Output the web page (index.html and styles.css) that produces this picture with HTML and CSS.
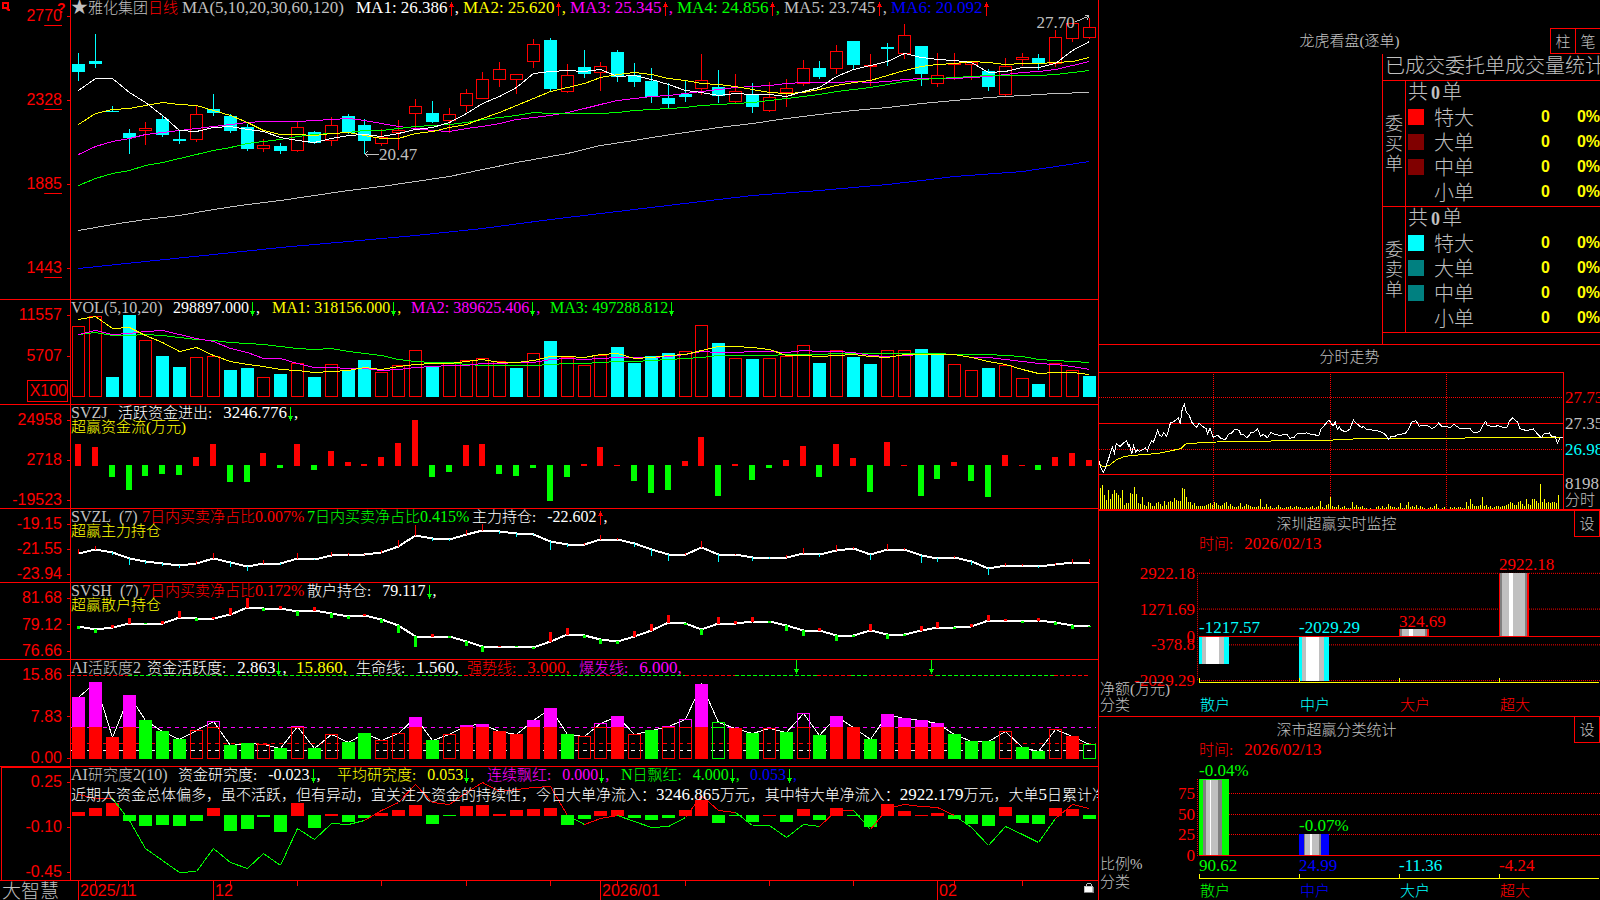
FILE: index.html
```html
<!DOCTYPE html>
<html lang="zh-CN">
<head>
<meta charset="utf-8">
<title>雅化集团 日线</title>
<link rel="stylesheet" href="styles.css">
</head>
<body>
<svg class="defs" aria-hidden="true">
  <symbol id="up" viewBox="0 0 5 14"><path d="M2 0h1v14H2zM1 2h3v2H1zM0 4h5v1H0z"/></symbol>
  <symbol id="down" viewBox="0 0 5 14"><path d="M2 0h1v14H2zM0 9h5v1H0zM1 10h3v2H1z"/></symbol>
</svg>
<div class="screen">
  <main class="charts">
    <section class="panel">
      <div class="axis axis-price">
        <svg class="pin" viewBox="0 0 8 9"><path d="M1 1h5v5H1z" fill="none" stroke="red" stroke-width="2"/><path d="M4 7h4v2H6z" fill="red"/></svg>
        <span class="help">?</span>
        <span>27<u>70</u></span><span>23<u>28</u></span><span>18<u>85</u></span><span>14<u>43</u></span>
      </div>
      <div class="plot">
        <svg id="price" class="canvas" viewBox="71 0 1027 299" preserveAspectRatio="none"></svg>
        <div class="readout cols-ma">
          <span class="gray">★<span class="zh">雅化集团</span><span class="zh red">日线</span></span>
          <span class="gray">MA(5,10,20,30,60,120)</span>
          <span class="white">MA1: 26.386<svg class="arrow red"><use href="#up"/></svg>,</span>
          <span class="yellow">MA2: 25.620<svg class="arrow red"><use href="#up"/></svg>,</span>
          <span class="magenta">MA3: 25.345<svg class="arrow red"><use href="#up"/></svg>,</span>
          <span class="green">MA4: 24.856<svg class="arrow red"><use href="#up"/></svg>,</span>
          <span class="gray">MA5: 23.745<svg class="arrow red"><use href="#up"/></svg>,</span>
          <span class="blue">MA6: 20.092<svg class="arrow red"><use href="#up"/></svg></span>
        </div>
        <span class="mark mark-low">20.47</span>
        <span class="mark mark-high">27.70</span>
      </div>
    </section>

    <section class="panel">
      <div class="axis axis-vol"><span>11557</span><span>5707</span><span class="unit">X100</span></div>
      <div class="plot">
        <svg id="volume" class="canvas" viewBox="71 300 1027 104" preserveAspectRatio="none"></svg>
        <div class="readout small cols-vol">
          <span class="gray">VOL(5,10,20)</span>
          <span class="white">298897.000<svg class="arrow green"><use href="#down"/></svg>,</span>
          <span class="yellow">MA1: 318156.000<svg class="arrow green"><use href="#down"/></svg>,</span>
          <span class="magenta">MA2: 389625.406<svg class="arrow green"><use href="#down"/></svg>,</span>
          <span class="green">MA3: 497288.812<svg class="arrow green"><use href="#down"/></svg></span>
        </div>
      </div>
    </section>

    <section class="panel">
      <div class="axis"><span>24958</span><span>2718</span><span>-19523</span></div>
      <div class="plot">
        <svg id="flow" class="canvas" viewBox="71 405 1027 103" preserveAspectRatio="none"></svg>
        <div class="readout cols-flow">
          <span class="gray small">SVZJ</span>
          <span class="white"><span class="zh key">活跃资金进出:</span>3246.776<svg class="arrow green"><use href="#down"/></svg>,</span>
        </div>
        <div class="sub zh">超赢资金流(万元)</div>
      </div>
    </section>

    <section class="panel">
      <div class="axis"><span>-19.15</span><span>-21.55</span><span>-23.94</span></div>
      <div class="plot">
        <svg id="mainhold" class="canvas" viewBox="71 509 1027 73" preserveAspectRatio="none"></svg>
        <div class="readout small cols-hold">
          <span class="gray">SVZL&nbsp; (7)</span>
          <span class="red">7<span class="zh">日内买卖净占比</span>0.007%</span>
          <span class="green">7<span class="zh">日内买卖净占比</span>0.415%</span>
          <span class="white"><span class="zh key">主力持仓:</span>-22.602<svg class="arrow red"><use href="#up"/></svg>,</span>
        </div>
        <div class="sub zh">超赢主力持仓</div>
      </div>
    </section>

    <section class="panel">
      <div class="axis"><span>81.68</span><span>79.12</span><span>76.66</span></div>
      <div class="plot">
        <svg id="retail" class="canvas" viewBox="71 583 1027 76" preserveAspectRatio="none"></svg>
        <div class="readout small cols-hold">
          <span class="gray">SVSH&nbsp; (7)</span>
          <span class="red">7<span class="zh">日内买卖净占比</span>0.172%</span>
          <span class="white"><span class="zh key">散户持仓:</span>79.117<svg class="arrow green"><use href="#down"/></svg>,</span>
        </div>
        <div class="sub zh">超赢散户持仓</div>
      </div>
    </section>

    <section class="panel">
      <div class="axis"><span>15.86</span><span>7.83</span><span>0.00</span></div>
      <div class="plot">
        <svg id="active" class="canvas" viewBox="71 660 1027 106" preserveAspectRatio="none"></svg>
        <div class="readout cols-active">
          <span class="gray small">AI<span class="zh">活跃度</span>2</span>
          <span class="white"><span class="zh key">资金活跃度:</span>2.863<svg class="arrow green"><use href="#down"/></svg>,</span>
          <span class="yellow">15.860,</span>
          <span class="white"><span class="zh key">生命线:</span>1.560,</span>
          <span class="red"><span class="zh key">强势线:</span>3.000,</span>
          <span class="magenta"><span class="zh key">爆发线:</span>6.000,</span>
        </div>
      </div>
    </section>

    <section class="panel">
      <div class="axis axis-boxed"><span>0.25</span><span>-0.10</span><span>-0.45</span></div>
      <div class="plot">
        <svg id="study" class="canvas" viewBox="71 767 1027 113" preserveAspectRatio="none"></svg>
        <div class="readout small cols-study">
          <span class="gray">AI<span class="zh">研究度</span>2(10)</span>
          <span class="white"><span class="zh key">资金研究度:</span>-0.023<svg class="arrow green"><use href="#down"/></svg>,</span>
          <span class="yellow"><span class="zh key">平均研究度:</span>0.053<svg class="arrow green"><use href="#down"/></svg>,</span>
          <span class="magenta"><span class="zh key">连续飘红:</span>0.000<svg class="arrow green"><use href="#down"/></svg>,</span>
          <span class="green">N<span class="zh key">日飘红:</span>4.000<svg class="arrow green"><use href="#down"/></svg>,</span>
          <span class="blue">0.053<svg class="arrow green"><use href="#down"/></svg>,</span>
        </div>
        <p class="comment"><span class="zh">近期大资金总体偏多，虽不活跃，但有异动，宜关注大资金的持续性，今日大单净流入：</span>3246.865<span class="zh">万元，其中特大单净流入：</span>2922.179<span class="zh">万元，大单</span>5<span class="zh">日累计净流入</span></p>
      </div>
    </section>

    <footer class="timeline">
      <div class="brand">大智慧</div>
      <div class="plot" id="dates">
        <svg id="ticks" class="canvas" viewBox="71 881 1027 19" preserveAspectRatio="none"></svg>
        <svg class="lock" viewBox="0 0 11 12"><path d="M2 4V2h1V1h4v1h1v2H7V2H3v2zM0 4h9v6H0z" fill="#c0c0c0"/><path d="M1 5h7v5H1z" fill="#fff"/><path d="M9 5h1v6H0v-1h9z" fill="#808080"/></svg>
      </div>
    </footer>
  </main>

  <aside class="side">
    <section class="orders">
      <header class="orders-head">
        <h2 class="zh">龙虎看盘(逐单)</h2>
        <div class="tabs"><button type="button">柱</button><button type="button">笔</button></div>
      </header>
      <div class="orders-body">
        <h3>已成交委托单成交量统计</h3>
        <table>
          <colgroup><col class="c-side"><col class="c-swatch"><col class="c-name"><col><col class="c-pct"></colgroup>
          <tbody>
            <tr><th rowspan="5" class="side-label">委<br>买<br>单</th><td colspan="4" class="total">共<b>0</b>单</td></tr>
            <tr><td><i class="swatch s-red"></i></td><th>特大</th><td class="num">0</td><td class="num">0%</td></tr>
            <tr><td><i class="swatch s-maroon"></i></td><th>大单</th><td class="num">0</td><td class="num">0%</td></tr>
            <tr><td><i class="swatch s-maroon"></i></td><th>中单</th><td class="num">0</td><td class="num">0%</td></tr>
            <tr><td></td><th>小单</th><td class="num">0</td><td class="num">0%</td></tr>
          </tbody>
          <tbody>
            <tr><th rowspan="5" class="side-label">委<br>卖<br>单</th><td colspan="4" class="total">共<b>0</b>单</td></tr>
            <tr><td><i class="swatch s-cyan"></i></td><th>特大</th><td class="num">0</td><td class="num">0%</td></tr>
            <tr><td><i class="swatch s-teal"></i></td><th>大单</th><td class="num">0</td><td class="num">0%</td></tr>
            <tr><td><i class="swatch s-teal"></i></td><th>中单</th><td class="num">0</td><td class="num">0%</td></tr>
            <tr><td></td><th>小单</th><td class="num">0</td><td class="num">0%</td></tr>
          </tbody>
        </table>
      </div>
    </section>

    <section class="intraday">
      <h2 class="zh">分时走势</h2>
      <div class="intraday-body">
        <div class="plot"><svg id="minute" class="canvas" viewBox="27 97 1395 411" preserveAspectRatio="none"></svg></div>
        <div class="scale"><span class="red">27.73</span><span class="gray">27.35</span><span class="cyan">26.98</span><span class="gray">8198</span><span class="gray zh">分时</span></div>
      </div>
    </section>

    <section class="stats stats-live">
      <header class="stats-head"><h2 class="zh">深圳超赢实时监控</h2><button type="button">设</button></header>
      <p class="stats-time red"><span class="zh key">时间:</span>2026/02/13</p>
      <div class="plot" id="live-plot"><svg id="live" class="canvas" viewBox="1099 551 501 145" preserveAspectRatio="none"></svg></div>
      <div class="cats zh"><span class="gray">分类</span><span class="cyan">散户</span><span class="cyan">中户</span><span class="red">大户</span><span class="red">超大</span></div>
    </section>

    <section class="stats">
      <header class="stats-head"><h2 class="zh">深市超赢分类统计</h2><button type="button">设</button></header>
      <p class="stats-time red"><span class="zh key">时间:</span>2026/02/13</p>
      <div class="plot" id="class-plot"><svg id="class" class="canvas" viewBox="1099 757 501 125" preserveAspectRatio="none"></svg></div>
      <div class="cats zh"><span></span><span class="green">散户</span><span class="blue">中户</span><span class="cyan">大户</span><span class="red">超大</span></div>
    </section>
  </aside>
</div>
<script src="charts.js"></script>
</body>
</html>
```

FILE: styles.css
```css
* { box-sizing: border-box; }

html, body { margin: 0; background: #000; }

body {
  color: #c0c0c0;
  font: 17px/15px "Liberation Serif", "Noto Sans CJK SC", serif;
  overflow: hidden;
}

h2, h3, p { margin: 0; font-weight: 400; }

.defs { position: absolute; width: 0; height: 0; }

.zh { font-family: "Liberation Serif", "Noto Sans CJK SC", sans-serif; font-size: 15px; font-weight: 300; }
.small { font-size: 16px; }
.key { margin-right: 11px; }

.red { color: #f00; }
.green { color: #0f0; }
.blue { color: #00f; }
.cyan { color: #0ff; }
.yellow { color: #ff0; }
.magenta { color: #f0f; }
.white { color: #fff; }
.gray { color: #c0c0c0; }

.screen {
  display: grid;
  grid-template-columns: minmax(0, 1fr) 501px;
  min-height: 100vh;
}

/* left column: stacked indicator panels */
.charts {
  display: grid;
  grid-template-rows: 300fr 105fr 104fr 74fr 77fr 107fr 114fr 19fr;
  border-right: 1px solid #f00;
}

.panel {
  display: grid;
  grid-template-columns: 71px minmax(0, 1fr);
  border-bottom: 1px solid #f00;
}

.axis {
  position: relative;
  display: flex;
  flex-direction: column;
  justify-content: space-between;
  padding-top: 7px;
  border-right: 1px solid #f00;
  color: #f00;
  font: 16px/16px "Liberation Sans", sans-serif;
}
.axis > span { display: flex; justify-content: flex-end; align-items: center; }
.axis > span::after { content: ""; width: 3px; height: 1px; margin-left: 5px; background: #f00; }
.axis u { text-underline-offset: 4px; text-decoration-thickness: 1px; }

.axis-price { padding: 8px 0 23px; }
.axis .help { position: absolute; left: 57px; top: 0; font-weight: 700; font-size: 14px; }
.axis .help::after { display: none; }
.pin { position: absolute; left: 2px; top: 2px; width: 8px; height: 9px; }

.axis-vol { display: grid; grid-template-columns: 100%; grid-template-rows: 41fr 32fr 22px; align-items: start; padding-bottom: 2px; }
.axis > .unit { justify-self: end; margin-right: 2px; height: 22px; padding: 0 0 0 2px; border: 1px solid #f00; }
.axis > .unit::after { display: none; }

.axis-boxed { margin-left: 1px; border-left: 1px solid #f00; border-top: 1px solid #f00; padding-top: 6px; }

.plot { position: relative; min-width: 0; }
.canvas { position: absolute; inset: 0; width: 100%; height: 100%; shape-rendering: crispEdges; }
.canvas * { vector-effect: non-scaling-stroke; }

.readout { position: relative; display: grid; height: 15px; white-space: nowrap; }
.cols-ma { grid-template-columns: 111px 174px repeat(5, 107px) auto; }
.cols-vol { grid-template-columns: 102px 99px 139px 139px auto; }
.cols-flow { grid-template-columns: 47px auto; }
.cols-hold { grid-template-columns: 71px 165px 165px auto; }
.cols-active { grid-template-columns: 76px 149px 60px 111px 112px auto; }
.cols-study { grid-template-columns: 107px 159px 150px 134px 129px auto; }

.arrow { width: 5px; height: 14px; margin: 0 1px; fill: currentColor; vertical-align: -3px; shape-rendering: crispEdges; }

.sub { position: relative; color: #ff0; }
.comment { position: relative; margin-top: 2px; padding: 3px 0; overflow: hidden; color: #fff; white-space: nowrap; }
.mark { position: absolute; font-size: 17px; }
.mark-low { left: 30%; top: 49%; }
.mark-high { left: 94%; top: 5%; }

.timeline { display: grid; grid-template-columns: 71px minmax(0, 1fr); }
.brand { padding-left: 2px; font: 300 19px/18px "Noto Sans CJK SC", sans-serif; white-space: nowrap; }
.date {
  position: absolute;
  top: 0;
  height: 100%;
  padding-left: 1px;
  border-left: 1px solid #f00;
  color: #f00;
  font: 16px/19px "Liberation Sans", sans-serif;
}
.lock { position: absolute; right: 3px; top: 1px; width: 11px; height: 12px; shape-rendering: crispEdges; }

/* right column */
.side { display: grid; grid-template-rows: 345fr 166fr 206fr 183fr; min-width: 0; }
.side > section { min-width: 0; overflow: hidden; }

button {
  width: 25px;
  height: 25px;
  padding: 0 0 2px;
  border: 1px solid #f00;
  background: #000;
  color: #c0c0c0;
  font: 300 15px/15px "Noto Sans CJK SC", sans-serif;
}

.orders { display: flex; flex-direction: column; border-bottom: 1px solid #f00; }
.orders-head { display: grid; grid-template-columns: 1fr auto 1fr; align-items: center; padding-top: 28px; height: 54px; }
.orders-head h2 { grid-column: 2; }
.tabs { justify-self: end; display: flex; }
.tabs button { border-right: 0; height: 26px; }

.orders-body {
  flex: 1;
  align-self: flex-end;
  width: 218px;
  overflow: hidden;
  border-left: 1px solid #f00;
  font: 300 20px/20px "Noto Sans CJK SC", sans-serif;
}
.orders-body h3 { height: 26px; padding-left: 2px; font-size: 20px; font-weight: 300; line-height: 22px; white-space: nowrap; }
table { width: 100%; table-layout: fixed; border-spacing: 0; border-bottom: 1px solid #f00; }
tr { height: 25px; }
td, th { padding: 0 0 3px; font-weight: 300; text-align: left; white-space: nowrap; }
tbody tr:first-child > * { border-top: 1px solid #f00; }
.c-side { width: 23px; }
.c-swatch { width: 28px; }
.c-name { width: 50px; }
.c-pct { width: 50px; }
.side-label { border-right: 1px solid #f00; text-align: center; font-size: 18px; }
.total { padding-left: 2px; }
.total b { margin: 0 2px 0 3px; font: 700 18px/20px "Liberation Serif", serif; }
.swatch { display: block; width: 16px; height: 16px; margin-left: 2px; }
.s-red { background: #f00; }
.s-maroon { background: #800000; }
.s-cyan { background: #0ff; }
.s-teal { background: #008080; }
.num { color: #ff0; text-align: right; font: 700 16px/20px "Liberation Sans", sans-serif; }

.intraday { display: flex; flex-direction: column; border-bottom: 2px solid #f00; }
.intraday h2 { height: 27px; line-height: 24px; text-align: center; }
.intraday-body { flex: 1; display: grid; grid-template-columns: minmax(0, 1fr) 36px; overflow: hidden; }
.scale { display: grid; grid-template-rows: 26fr 26fr 34fr 17fr 16fr; padding-top: 18px; padding-left: 1px; overflow: hidden; white-space: nowrap; }

.stats { display: flex; flex-direction: column; }
.stats-live { border-bottom: 1px solid #f00; }
.stats-head { display: grid; grid-template-columns: 1fr 26px; height: 25px; align-items: center; text-align: center; }
.stats-head button { border-top: 0; width: 26px; height: 26px; }
.stats-time { padding-left: 100px; }
.stats .plot { flex: 1; }
.cats { display: grid; grid-template-columns: 100px repeat(4, 1fr); height: 18px; line-height: 18px; padding-left: 1px; }
.stats-live .cats { height: 20px; line-height: 19px; }
.tag { position: absolute; transform: translateY(-50%); white-space: nowrap; }
.tag-end { text-align: right; }
```

FILE: charts.js
```js
const RED = '#f00', GREEN = '#0f0', CYAN = '#0ff', YELLOW = '#ff0', MAGENTA = '#f0f', WHITE = '#fff', GRAY = '#c0c0c0', BLUE = '#00f';
const cx = i => Math.round(78 + 16.85 * i);
const put = (id, parts) => { document.getElementById(id).innerHTML = parts.join(''); };
const rect = (x, y, w, h, fill) => `<rect x="${x}" y="${y}" width="${w}" height="${h}" fill="${fill}"/>`;
const box = (x, y, w, h, stroke) => `<rect x="${x + 0.5}" y="${y + 0.5}" width="${w - 1}" height="${h - 1}" fill="none" stroke="${stroke}"/>`;
const seg = (x1, y1, x2, y2, stroke, extra = '') => `<line x1="${x1}" y1="${y1}" x2="${x2}" y2="${y2}" stroke="${stroke}" ${extra}/>`;
const path = (pts, stroke, width = 1) => `<polyline points="${pts.join(' ')}" fill="none" stroke="${stroke}" stroke-width="${width}"/>`;
const series = (ys, stroke, width) => path(ys.map((y, i) => `${cx(i) + 0.5},${y + 0.5}`), stroke, width);
const sparse = (pairs, stroke) => path(pairs.map(([i, y]) => `${cx(i) + 0.5},${y + 0.5}`), stroke);

// daily candles: colour, high, body top, body bottom, low
const candles = `c 53 64 72 81|c 34 61 64 68|c 106 111 112 112|c 129 133 138 154|r 122 128 131 145|c 115 119 135 137|c 130 139 141 144|r 106 114 140 142|c 94 109 113 116|c 114 116 131 133|c 124 127 149 151|r 139 145 149 152|c 143 146 151 154|r 122 127 151 152|c 131 132 143 144|r 117 125 141 146|c 114 116 133 134|c 119 125 141 154|r 129 137 144 146|r 120 130 133 150|r 99 106 114 128|c 101 113 122 123|r 108 114 121 133|r 89 93 106 112|r 72 79 99 99|r 62 69 80 87|r 74 74 80 94|r 39 44 62 68|c 38 40 89 92|r 64 75 92 93|c 50 67 74 78|r 62 66 73 91|c 50 52 77 82|c 63 75 82 87|c 68 81 97 103|c 83 98 104 108|c 81 94 97 102|r 54 80 89 95|c 70 87 96 103|r 74 91 102 103|c 83 95 107 113|r 82 97 111 112|r 79 88 93 107|r 60 68 84 86|c 61 68 77 79|r 45 51 69 74|c 41 41 65 69|r 54 65 67 86|c 43 47 49 66|r 24 35 54 59|c 46 46 74 86|r 53 75 84 87|r 53 63 65 80|r 61 62 65 80|c 69 71 87 91|r 58 66 95 96|r 53 57 60 66|c 54 58 63 70|r 30 37 64 67|r 23 23 39 42|r 18 27 38 39`
  .split('|').map(s => s.split(' ')).map(([k, ...v]) => [k, ...v.map(Number)]);

put('price', [
  ...candles.map(([k, hi, top, bot, lo], i) => {
    const x = cx(i), c = k === 'c' ? CYAN : RED;
    return rect(x, hi, 1, top - hi, c) + rect(x, bot, 1, lo - bot, c) +
      (k === 'c' ? rect(x - 6, top, 13, bot - top, c) : box(x - 6, top, 13, bot - top, c));
  }),
  sparse([[0,268],[4,261],[8,254],[12,247],[16,241],[20,235],[24,228],[28,219],[32,211],[37,201],[40,195],[44,190],[48,184],[50,180],[52,176],[56,171],[60,161]], BLUE),
  sparse([[0,230],[2,224],[4,219],[6,215],[8,209],[10,204],[12,200],[14,195],[16,190],[18,186],[20,181],[22,176],[24,169],[26,162],[28,156],[29,153],[31,145],[33,140],[34,137],[36,132],[38,127],[40,123],[42,118],[44,114],[46,110],[48,107],[50,103],[52,100],[54,97],[56,95],[58,93],[60,92]], GRAY),
  series([154,146,141,138,134,132,130,128,126,124,122,121,121,121,120,119,118,120,123,126,128,130,131,128,126,123,119,117,115,112,108,104,100,98,96,95,93,91,89,87,86,85,83,82,82,82,81,82,81,79,78,78,78,77,76,74,72,71,69,65,61], MAGENTA),
  series([185,178,173,170,165,162,158,154,150,147,143,141,139,136,134,133,132,130,130,128,126,125,124,122,119,117,115,112,113,113,113,113,112,110,109,108,107,105,104,103,102,100,98,96,94,91,89,87,84,81,79,78,77,76,75,75,75,75,74,72,70], GREEN),
  series([124,113,109,108,105,102,104,105,110,115,122,130,134,134,135,133,132,135,138,138,133,131,127,124,118,112,105,98,91,87,83,77,74,72,74,78,80,83,84,86,89,92,93,92,89,85,82,80,75,70,66,64,63,61,62,64,63,63,62,61,57], YELLOW),
  series([90,78,78,92,102,115,130,131,127,126,129,131,137,140,142,138,135,134,136,133,129,127,122,113,103,96,87,73,71,70,71,69,76,75,79,84,90,92,95,93,94,94,96,91,87,76,69,65,61,53,57,59,60,62,72,71,67,67,63,50,41], WHITE),
  path(['368,151', '365,154', '368,157'], GRAY), seg(365, 154.5, 379, 154.5, GRAY),
  path(['1075,22', '1089,16'], GRAY), path(['1085,15', '1089,16', '1087,20'], GRAY)
]);

// volume: r = hollow red, c = solid cyan
const volKind = 'rrccrccrrccrcrcrccrrrcrrrrcrcrrrccccrrcrcrrrcrccrrccrrcrrcrrc';
const volTop = [326,316,377,315,340,356,367,357,356,370,368,377,374,363,377,364,370,360,372,365,350,367,363,360,358,361,368,353,341,357,365,355,347,363,356,353,351,325,343,358,359,358,356,345,363,350,357,364,350,350,349,354,364,370,368,365,378,384,363,370,376];
put('volume', [
  ...volTop.map((t, i) => volKind[i] === 'c' ? rect(cx(i) - 6, t, 13, 397 - t, CYAN) : box(cx(i) - 6, t, 13, 397 - t, RED)),
  series([334,332,335,335,334,335,337,339,340,342,343,344,346,348,349,348,351,353,355,359,361,362,362,364,365,365,365,365,364,363,363,362,361,361,360,359,358,357,355,355,355,355,354,354,354,353,353,353,353,353,353,353,354,354,354,355,356,359,360,361,362], GREEN),
  series([334,330,334,333,331,330,334,338,341,348,352,358,358,363,367,367,368,368,370,369,367,366,365,365,363,363,362,362,359,358,359,358,357,357,357,356,354,351,352,352,351,351,352,350,351,351,352,355,356,355,354,354,354,357,357,359,361,363,364,366,369], MAGENTA),
  series([319,316,328,327,335,342,351,347,355,361,364,366,369,370,372,371,370,367,369,366,364,363,363,361,359,362,362,360,356,356,357,354,353,358,357,355,354,350,346,346,347,349,355,355,356,355,354,356,357,354,354,354,354,357,361,364,369,373,372,372,374], YELLOW)
]);

// bars that grow up (red) or down from a zero line
const bars = (ends, zero, w, down) => ends.map((e, i) => {
  const x = cx(i) - (w >> 1);
  return e <= zero ? rect(x, e, w, zero + 1 - e, RED) : rect(x, zero, w, e - zero, down);
});

put('flow', bars([444,447,477,490,476,474,475,457,444,482,482,453,468,444,470,451,462,464,457,443,420,477,472,445,444,474,476,468,501,477,464,447,465,481,493,490,461,437,496,464,480,468,460,446,477,444,458,492,442,465,496,479,462,481,497,455,465,470,457,453,460], 465, 6, GREEN));

const spikes = (line, ends, w, down) => line.map((y, i) => {
  const e = ends[i], x = cx(i) - (w >> 1);
  return e <= y ? rect(x, e, w, y - e + 1, RED) : rect(x, y, w, e - y, down);
});

const main = [553,549,552,558,561,563,565,563,558,562,566,563,563,558,559,555,554,554,552,546,535,538,539,534,530,531,533,534,541,544,544,539,539,543,549,554,554,547,554,554,557,557,557,553,554,550,548,554,549,549,555,558,557,561,568,565,565,566,564,562,562];
put('mainhold', [series(main, WHITE, 2), ...spikes(main, [549,546,555,565,564,566,568,561,553,567,571,560,565,553,560,552,553,554,550,540,525,541,541,530,524,534,537,535,550,547,543,535,538,547,556,561,553,541,562,554,561,559,555,548,557,545,547,560,544,548,563,562,556,565,575,563,564,568,563,559,559], 1, CYAN)]);

const retail = [626,629,627,623,623,623,617,618,618,614,607,608,608,611,610,613,616,615,619,625,636,636,636,641,646,646,646,647,641,634,635,639,641,636,630,622,623,629,623,623,621,621,625,630,630,635,635,630,634,634,630,627,627,626,620,620,621,620,622,625,626];
put('retail', [series(retail, WHITE, 2), ...spikes(retail, [629,633,625,618,624,621,611,621,617,608,598,611,606,616,607,618,619,614,623,633,647,634,638,646,652,646,647,649,632,628,638,644,644,631,624,615,625,635,617,621,617,623,631,636,628,641,637,624,639,636,626,622,629,624,615,619,623,618,625,629,627], 3, GREEN)]);

// activity bars: F solid red, G solid green, O hollow red, H hollow green; magenta above the 6.0 level
const actKind = 'FFFFGGGOOGGOGOGOGGOOFGOFFFFFFGOOFOGOOFHFGOGOGFFGFFFFGGGOGGOFH';
const actTop = [697,682,737,695,720,731,739,730,721,745,743,744,748,726,748,734,742,733,740,733,717,740,734,725,724,731,734,720,708,734,736,723,716,734,730,726,719,684,722,728,733,728,732,713,735,716,727,739,714,718,720,723,734,741,741,731,747,751,729,736,744];
const edges = [71,128,464,549,600,617,685,735,817,851,869,936,1054,1088];
put('active', [
  ...edges.slice(1).map((x, i) => seg(edges[i], 675.5, x, 675.5, i % 2 ? GREEN : RED, 'stroke-dasharray="4 2"')),
  seg(71, 727.5, 1096, 727.5, MAGENTA, 'stroke-dasharray="4 4"'),
  seg(71, 743.5, 1096, 743.5, RED, 'stroke-dasharray="4 4"'),
  seg(71, 750.5, 1096, 750.5, WHITE, 'stroke-dasharray="4 4"'),
  series(actTop, WHITE),
  ...actTop.map((t, i) => {
    const x = cx(i) - 6, k = actKind[i];
    if (k === 'G') return rect(x, t, 13, 759 - t, GREEN);
    if (k === 'F') return t < 727 ? rect(x, t, 13, 727 - t, MAGENTA) + rect(x, 727, 13, 32, RED) : rect(x, t, 13, 759 - t, RED);
    if (k === 'H') return box(x, t, 13, 759 - t, GREEN) + (t < 727 ? rect(x, 727, 13, 1, GREEN) : '');
    return t < 727 ? box(x, t, 13, 728 - t, MAGENTA) + box(x, 727, 13, 32, RED) : box(x, t, 13, 759 - t, RED);
  }),
  ...[796, 931].map(x => rect(x, 660, 1, 14, GREEN) + rect(x - 2, 669, 5, 1, GREEN) + rect(x - 1, 670, 3, 2, GREEN))
]);

const study = [794,798,798,820,848,860,872,871,848,862,868,853,865,828,839,823,824,820,810,802,784,802,804,792,782,791,789,787,786,815,824,818,815,821,827,826,817,795,810,812,825,825,837,824,826,810,810,829,808,804,806,807,815,827,845,826,834,842,818,804,808];
const studyTone = 'rrgggggggggggggggrrrrrrrrrrrrgrrggggrrrgggggrrgrrrrrggggggrr';
put('study', [
  ...bars([812,808,803,821,826,825,826,821,808,831,829,817,832,803,828,814,822,818,813,810,805,824,816,806,805,814,810,809,808,825,819,811,810,818,820,818,810,800,823,816,822,815,822,809,820,808,816,827,804,811,815,813,819,824,826,807,823,824,808,809,819], 815, 13, GREEN),
  ...[...studyTone].map((t, i) => seg(cx(i) + 0.5, study[i] + 0.5, cx(i + 1) + 0.5, study[i + 1] + 0.5, t === 'r' ? RED : GREEN))
]);

put('ticks', [95,128,230,297,381,466,550,617,685,769,853,954,1022].map(x => rect(x, 881, 1, 5, RED)));
[['2025/11', 78], ['12', 213], ['2026/01', 600], ['02', 937]].forEach(([t, x]) => {
  const el = document.createElement('span');
  el.className = 'date';
  el.textContent = t;
  el.style.left = (x - 71) / 10.27 + '%';
  document.getElementById('dates').append(el);
});

// intraday price, average and per-minute volume
const dots = 'stroke-dasharray="1 1"';
const mins = [21,24,14,9,19,10,15,19,16,14,11,19,4,6,6,16,15,22,15,6,5,12,4,3,7,6,3,3,6,7,5,3,8,4,7,8,7,11,9,8,8,21,20,12,7,7,4,6,3,3,3,3,3,4,5,6,4,7,6,4,3,4,6,7,3,5,3,2,2,3,6,2,3,5,4,3,2,2,2,3,10,2,2,5,2,3,1,1,2,4,2,1,1,2,2,3,1,2,3,2,2,1,1,2,1,2,3,1,2,3,8,2,1,4,5,12,3,2,2,4,1,2,3,1,1,1,7,2,4,2,2,3,1,1,0,1,0,0,2,3,1,3,1,2,5,3,2,2,1,2,6,1,1,4,7,2,3,2,4,1,3,2,1,0,1,2,1,3,5,1,0,1,2,0,0,2,1,2,1,2,2,1,1,7,3,10,5,3,3,3,4,12,3,4,2,3,1,2,3,3,2,3,3,4,5,7,6,4,4,7,8,5,3,10,5,4,10,10,8,6,25,7,10,6,7,6,7,7,6,14,0,0,19];
put('minute', [
  ...[172, 328].map(y => seg(27, y, 1420, y, RED, dots)),
  ...[370, 721, 1069].map(x => seg(x, 97, x, 507, RED, dots)),
  ...[98.5, 250, 403].map(y => seg(27, y, 1420, y, RED)),
  seg(1420.5, 97, 1420.5, 508, RED),
  ...mins.map((h, i) => rect(30 + 6 * i, 507 - 3 * h, 3, 3 * h + 1, YELLOW)),
  path(['27,373 40,382 58,377 80,360 100,352 125,347 165,345 210,340 240,334 272,327 287,313 320,310 380,307 490,305 600,303 710,302 790,298 1040,297 1210,293 1420,292'], YELLOW),
  path(['27,365 33,385 40,397 46,385 55,360 67,322 73,340 79,312 90,320 100,310 110,303 116,320 119,316 125,343 131,318 137,337 143,330 149,335 158,330 166,325 172,333 179,315 185,303 190,308 203,272 209,287 215,290 221,278 230,290 236,270 242,247 250,247 265,235 271,252 277,205 283,194 290,220 297,225 305,247 319,264 327,250 340,262 348,266 353,283 360,265 370,293 383,287 394,297 406,300 415,284 425,280 435,268 447,272 452,283 460,283 470,294 478,287 483,277 492,277 503,268 512,290 520,284 532,294 543,278 555,284 570,287 590,283 600,297 608,292 612,294 620,283 635,281 650,280 660,283 672,283 680,288 687,287 692,270 703,257 717,241 724,252 730,258 736,247 742,270 748,262 755,272 768,277 780,268 790,241 800,252 815,264 820,260 830,270 860,272 880,280 890,290 896,300 903,290 912,292 925,284 945,282 955,270 965,247 978,243 988,260 1000,256 1018,260 1025,267 1035,263 1046,250 1055,260 1070,260 1080,264 1092,254 1110,267 1140,267 1150,278 1157,280 1170,275 1180,255 1187,245 1192,258 1205,260 1215,262 1222,257 1235,262 1250,265 1258,245 1267,235 1283,247 1290,267 1310,273 1330,268 1340,280 1354,294 1362,283 1378,280 1385,290 1395,290 1402,310 1410,295 1420,292'], WHITE)
]);

// cylinder-shaded bar: stripes are [offset, width, colour]
const tube = (x, y, h, base, stripes) => rect(x, y, 30, h, base) + stripes.map(([dx, w, c]) => rect(x + dx, y, w, h, c)).join('');
const cold = [[3,4,GRAY],[7,13,WHITE],[20,5,GRAY]];
const warm = [[1,2,'#808080'],[3,7,GRAY],[10,4,WHITE],[14,12,GRAY],[26,2,'#808080']];
const scaleLine = y => [1199, 1299, 1399, 1499].map(x => rect(x, y - 4, 1, 4, YELLOW)).join('') + rect(1199, y, 400, 1, YELLOW);

put('live', [
  ...[572.5, 608.5, 644.5, 680.5].map(y => seg(1199, y, 1600, y, RED, dots)),
  seg(1197.5, 572, 1197.5, 681, RED, dots),
  tube(1199, 637, 27, CYAN, cold), tube(1299, 637, 44, CYAN, cold),
  tube(1399, 629, 7, RED, warm), tube(1499, 572, 64, RED, warm),
  rect(1199, 636, 401, 1, RED), scaleLine(682)
]);
put('class', [
  ...[792.5, 813.5, 834.5].map(y => seg(1199, y, 1600, y, RED, dots)),
  seg(1197.5, 778, 1197.5, 856, RED, dots),
  tube(1199, 778, 77, GREEN, [[4,3,'#808080'],[7,4,GRAY],[11,1,WHITE],[12,7,GRAY],[19,4,'#808080']]),
  rect(1199, 778, 30, 1, GREEN),
  tube(1299, 834, 21, BLUE, [[5,1,'#808080'],[6,5,GRAY],[11,2,WHITE],[13,7,GRAY],[20,2,'#808080']]),
  rect(1199, 855, 401, 1, RED), scaleLine(878)
]);

// chart labels: text, x (right edge when end-aligned), y, colour class
const tags = (host, top, height, list) => list.forEach(([text, x, y, cls, end]) => {
  const el = document.createElement('span');
  el.className = 'tag ' + cls + (end ? ' tag-end' : '');
  el.textContent = text;
  if (end) el.style.right = (1600 - x) / 5.01 + '%';
  else el.style.left = (x - 1099) / 5.01 + '%';
  el.style.top = (y - top) / height * 100 + '%';
  document.getElementById(host).append(el);
});
tags('live-plot', 551, 145, [
  ['2922.18', 1195, 572, 'red', 1], ['1271.69', 1195, 608, 'red', 1], ['0', 1195, 636, 'red', 1], ['-378.8', 1195, 644, 'red', 1], ['-2029.29', 1195, 680, 'red', 1],
  ['-1217.57', 1199, 627, 'cyan'], ['-2029.29', 1299, 627, 'cyan'], ['324.69', 1399, 620, 'red'], ['2922.18', 1499, 563, 'red'],
  ['净额(万元)', 1100, 689, 'gray zh']
]);
tags('class-plot', 757, 125, [
  ['75', 1195, 792, 'red', 1], ['50', 1195, 813, 'red', 1], ['25', 1195, 834, 'red', 1], ['0', 1195, 855, 'red', 1],
  ['-0.04%', 1199, 769, 'green'], ['-0.07%', 1299, 825, 'green'],
  ['90.62', 1199, 865, 'green'], ['24.99', 1299, 865, 'blue'], ['-11.36', 1399, 865, 'cyan'], ['-4.24', 1499, 865, 'red'],
  ['比例%', 1100, 864, 'gray zh'], ['分类', 1100, 882, 'gray zh']
]);
```
